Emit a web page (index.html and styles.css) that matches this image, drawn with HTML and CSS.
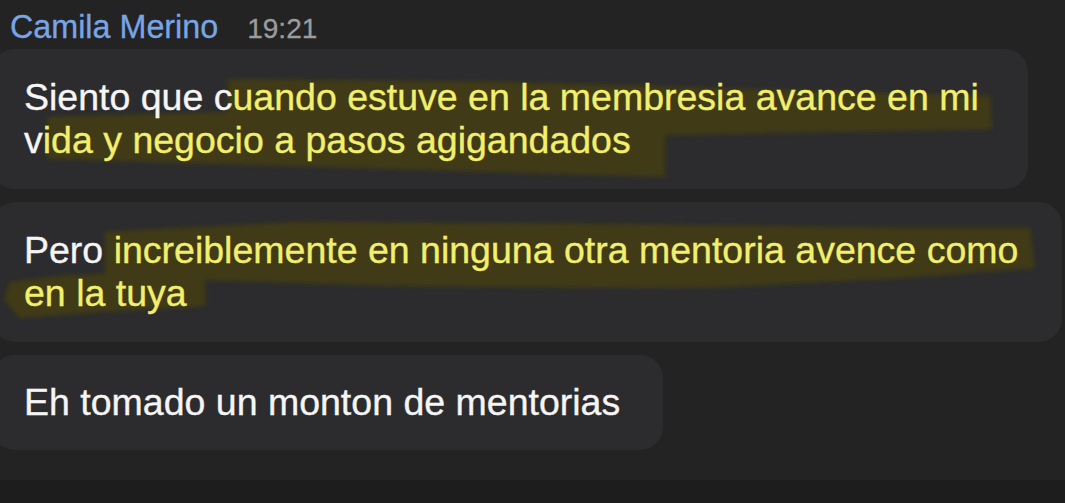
FILE: index.html
```html
<!DOCTYPE html>
<html lang="es">
<head>
<meta charset="utf-8">
<title>Camila Merino</title>
<link rel="stylesheet" href="styles.css">
</head>
<body>
<div class="page">
  <main class="chat">
    <header class="sender">
      <span class="sender-name">Camila Merino</span>
      <span class="sender-time">19:21</span>
    </header>
    <div class="messages">
      <div class="bubble bubble--one">
        <svg class="marker" viewBox="0 0 1036 140" preserveAspectRatio="none" aria-hidden="true">
          <defs><filter id="soft1" x="-5%" y="-20%" width="110%" height="140%"><feGaussianBlur stdDeviation="2.2"/></filter></defs>
          <path filter="url(#soft1)" d="M56 68 L236 63 L236 30 L508 33 L998 47 L1000 80 L673 86 L673 128 L308 117 L56 110 Z"/>
        </svg>
        <p class="text">Siento que c<span class="hl">uando estuve en la membresia avance en mi</span><br>v<span class="hl">ida y negocio a pasos agigandados</span></p>
      </div>
      <div class="bubble bubble--two">
        <svg class="marker" viewBox="0 0 1070 140" preserveAspectRatio="none" aria-hidden="true">
          <defs><filter id="soft2" x="-5%" y="-20%" width="110%" height="140%"><feGaussianBlur stdDeviation="2.2"/></filter></defs>
          <path filter="url(#soft2)" d="M113 30 L308 20 L608 22 L908 26 L1038 26 L1043 66 L908 76 L708 86 L408 84 L213 78 L213 104 L108 110 L28 116 L12 98 L18 80 L68 74 L113 72 Z"/>
        </svg>
        <p class="text">Pero <span class="hl">increiblemente en ninguna otra mentoria avence como</span><br><span class="hl">en la tuya</span></p>
      </div>
      <div class="bubble bubble--three">
        <p class="text">Eh tomado un monton de mentorias</p>
      </div>
    </div>
  </main>
  <footer class="composer"></footer>
</div>
</body>
</html>
```

FILE: styles.css
```css
* { box-sizing: border-box; }

html, body {
  margin: 0;
  padding: 0;
  background: #232323;
  overflow: hidden;
}

.page {
  width: 1065px;
  height: 503px;
  display: flex;
  flex-direction: column;
  font-family: "Liberation Sans", Arial, sans-serif;
}

.chat {
  height: 480px;
  background: #232323;
  display: flex;
  flex-direction: column;
}

.composer {
  flex: 1;
  background: #1d1d1d;
}

.sender {
  padding: 7px 0 0 10px;
  height: 49px;
  display: flex;
  align-items: baseline;
  gap: 29px;
  line-height: 40px;
}

.sender-name {
  font-size: 32.3px;
  color: #78a5e6;
  -webkit-text-stroke: 0.3px #78a5e6;
}

.sender-time {
  font-size: 28px;
  color: #9c9c9c;
  -webkit-text-stroke: 0.3px #9c9c9c;
}

.messages {
  display: flex;
  flex-direction: column;
  align-items: flex-start;
  gap: 13px;
}

.bubble {
  position: relative;
  margin-left: -8px;
  padding: 27px 0 27px 32px;
  background: #2c2c2e;
  border-radius: 23px;
  overflow: hidden;
}

.bubble--one { width: 1036px; }
.bubble--two { width: 1070px; }
.bubble--three { width: 671px; padding-top: 26px; padding-bottom: 26px; }

.marker {
  position: absolute;
  inset: 0;
  width: 100%;
  height: 100%;
}

.marker path {
  fill: #3f3b14;
}

.text {
  position: relative;
  margin: 0;
  font-size: 37.5px;
  line-height: 43px;
  color: #f5f5f5;
  white-space: nowrap;
  -webkit-text-stroke: 0.35px #f5f5f5;
}

.hl {
  color: #f2ee6e;
  -webkit-text-stroke: 0.35px #f2ee6e;
}
```
